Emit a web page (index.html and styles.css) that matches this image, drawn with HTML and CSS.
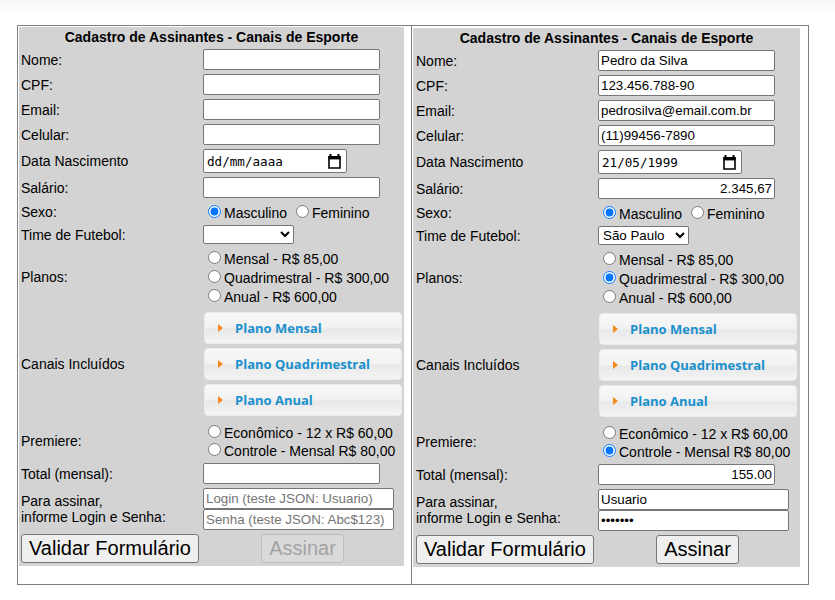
FILE: index.html
```html
<!DOCTYPE html>
<html lang="pt-BR">
<head>
<meta charset="utf-8">
<title>Cadastro de Assinantes - Canais de Esporte</title>
<link rel="stylesheet" href="styles.css">
</head>
<body>
<div class="frame">
  <div class="cell">
    <form class="panel">
      <div class="title">Cadastro de Assinantes - Canais de Esporte</div>
      <div class="lbl">Nome:</div><div class="fld"><input class="txt" type="text"></div>
      <div class="lbl">CPF:</div><div class="fld"><input class="txt" type="text"></div>
      <div class="lbl">Email:</div><div class="fld"><input class="txt" type="text"></div>
      <div class="lbl">Celular:</div><div class="fld"><input class="txt" type="text"></div>
      <div class="lbl">Data Nascimento</div>
      <div class="fld"><div class="date"><span>dd/mm/aaaa</span><svg class="cal" width="13" height="15" viewBox="0 0 13 15"><path d="M1.5 0h2v3h-2zM9.5 0h2v3h-2z" fill="#000"/><path d="M1 2.8h11v11.2H1z" fill="none" stroke="#000" stroke-width="1.6"/><rect x="0.5" y="2" width="12" height="3.4" fill="#000"/></svg></div></div>
      <div class="lbl">Salário:</div><div class="fld"><input class="txt num" type="text"></div>
      <div class="lbl">Sexo:</div>
      <div class="fld"><div class="opt"><input type="radio" name="sx1" checked>Masculino <input type="radio" name="sx1">Feminino</div></div>
      <div class="lbl">Time de Futebol:</div>
      <div class="fld"><select class="sel"><option></option></select></div>
      <div class="lbl">Planos:</div>
      <div class="fld">
        <label class="opt"><input type="radio" name="pl1">Mensal - R$ 85,00</label>
        <label class="opt"><input type="radio" name="pl1">Quadrimestral - R$ 300,00</label>
        <label class="opt"><input type="radio" name="pl1">Anual - R$ 600,00</label>
      </div>
      <div class="lbl">Canais Incluídos</div>
      <div class="fld">
        <div class="acc">
          <div class="acc-item"><span class="arrow"></span>Plano Mensal</div>
          <div class="acc-item"><span class="arrow"></span>Plano Quadrimestral</div>
          <div class="acc-item"><span class="arrow"></span>Plano Anual</div>
        </div>
      </div>
      <div class="lbl">Premiere:</div>
      <div class="fld tight">
        <label class="opt"><input type="radio" name="pr1">Econômico - 12 x R$ 60,00</label>
        <label class="opt"><input type="radio" name="pr1">Controle - Mensal R$ 80,00</label>
      </div>
      <div class="lbl">Total (mensal):</div><div class="fld"><input class="txt num" type="text"></div>
      <div class="lbl">Para assinar,<br>informe Login e Senha:</div>
      <div class="fld">
        <input class="txt login" type="text" placeholder="Login (teste JSON: Usuario)">
        <input class="txt login" type="password" placeholder="Senha (teste JSON: Abc$123)">
      </div>
      <div class="fld"><button class="btn" type="button">Validar Formulário</button></div>
      <div class="fld center"><button class="btn" type="button" disabled>Assinar</button></div>
    </form>
  </div>
  <div class="cell cell-b">
    <form class="panel panel-b">
      <div class="title">Cadastro de Assinantes - Canais de Esporte</div>
      <div class="lbl">Nome:</div><div class="fld"><input class="txt" type="text" value="Pedro da Silva"></div>
      <div class="lbl">CPF:</div><div class="fld"><input class="txt" type="text" value="123.456.788-90"></div>
      <div class="lbl">Email:</div><div class="fld"><input class="txt" type="text" value="pedrosilva@email.com.br"></div>
      <div class="lbl">Celular:</div><div class="fld"><input class="txt" type="text" value="(11)99456-7890"></div>
      <div class="lbl">Data Nascimento</div>
      <div class="fld"><div class="date"><span>21/05/1999</span><svg class="cal" width="13" height="15" viewBox="0 0 13 15"><path d="M1.5 0h2v3h-2zM9.5 0h2v3h-2z" fill="#000"/><path d="M1 2.8h11v11.2H1z" fill="none" stroke="#000" stroke-width="1.6"/><rect x="0.5" y="2" width="12" height="3.4" fill="#000"/></svg></div></div>
      <div class="lbl">Salário:</div><div class="fld"><input class="txt num" type="text" value="2.345,67"></div>
      <div class="lbl">Sexo:</div>
      <div class="fld"><div class="opt"><input type="radio" name="sx2" checked>Masculino <input type="radio" name="sx2">Feminino</div></div>
      <div class="lbl">Time de Futebol:</div>
      <div class="fld"><select class="sel"><option>São Paulo</option></select></div>
      <div class="lbl">Planos:</div>
      <div class="fld">
        <label class="opt"><input type="radio" name="pl2">Mensal - R$ 85,00</label>
        <label class="opt"><input type="radio" name="pl2" checked>Quadrimestral - R$ 300,00</label>
        <label class="opt"><input type="radio" name="pl2">Anual - R$ 600,00</label>
      </div>
      <div class="lbl">Canais Incluídos</div>
      <div class="fld">
        <div class="acc">
          <div class="acc-item"><span class="arrow"></span>Plano Mensal</div>
          <div class="acc-item"><span class="arrow"></span>Plano Quadrimestral</div>
          <div class="acc-item"><span class="arrow"></span>Plano Anual</div>
        </div>
      </div>
      <div class="lbl">Premiere:</div>
      <div class="fld tight">
        <label class="opt"><input type="radio" name="pr2">Econômico - 12 x R$ 60,00</label>
        <label class="opt"><input type="radio" name="pr2" checked>Controle - Mensal R$ 80,00</label>
      </div>
      <div class="lbl">Total (mensal):</div><div class="fld"><input class="txt num" type="text" value="155.00"></div>
      <div class="lbl">Para assinar,<br>informe Login e Senha:</div>
      <div class="fld">
        <input class="txt login" type="text" placeholder="Login (teste JSON: Usuario)" value="Usuario">
        <input class="txt login" type="password" placeholder="Senha (teste JSON: Abc$123)" value="Abc$123">
      </div>
      <div class="fld"><button class="btn" type="button">Validar Formulário</button></div>
      <div class="fld center"><button class="btn" type="button">Assinar</button></div>
    </form>
  </div>
</div>
</body>
</html>
```
FILE: styles.css
```css
html, body {
  margin: 0;
  padding: 0;
}
body {
  background: #fff linear-gradient(to bottom, #f6f6f6 0, #ffffff 12px) no-repeat;
  font-family: "Liberation Sans", Arial, sans-serif;
  font-size: 14px;
  color: #000;
  padding: 25px 0 0 17px;
}
.frame {
  display: grid;
  grid-template-columns: 393px 397px;
  align-items: start;
  width: max-content;
  border: 1px solid #808080;
}
.cell {
  padding: 1px 1px 17px;
}
.cell-b {
  border-left: 1px solid #808080;
  align-self: stretch;
}
.panel {
  display: grid;
  grid-template-columns: 180px 199px;
  gap: 2px;
  padding: 2px;
  background: #d3d3d3;
  width: max-content;
  align-items: center;
  margin: 0;
}
.panel-b {
  padding: 2px 3px;
  margin-top: 1px;
}
.title {
  grid-column: 1 / -1;
  text-align: center;
  font-weight: bold;
  line-height: 16px;
  padding: 0 0 1px;
}
.lbl {
  padding: 1px 0;
  line-height: 16px;
}
.fld {
  padding: 1px 0;
}
.center {
  text-align: center;
}
.txt {
  display: block;
  box-sizing: border-box;
  width: 177px;
  height: 21px;
  margin: 0;
  padding: 1px 2px;
  border: 1px solid #767676;
  border-radius: 2px;
  background: #fff;
  color: #000;
  font-family: "Liberation Sans", Arial, sans-serif;
  font-size: 13.333px;
  outline: none;
}
.txt::placeholder {
  color: #757575;
}
.num {
  text-align: right;
}
.login {
  width: 191px;
}
.date {
  box-sizing: border-box;
  width: 144px;
  height: 24px;
  border: 1px solid #767676;
  border-radius: 2px;
  background: #fff;
  display: flex;
  align-items: center;
  justify-content: space-between;
  padding: 0 5px 0 3px;
  font-family: "DejaVu Sans Mono", "Liberation Mono", monospace;
  font-size: 12.6px;
}
.cal {
  display: block;
}
.sel {
  display: block;
  box-sizing: border-box;
  width: 91px;
  height: 19px;
  margin: 0;
  font-family: "Liberation Sans", Arial, sans-serif;
  font-size: 13.333px;
  color: #000;
  background: #fff;
  border: 1px solid #767676;
  border-radius: 2px;
}
.opt {
  display: block;
  height: 19px;
  white-space: nowrap;
}
.tight .opt {
  height: 18px;
}
.opt input {
  margin: 3px 3px 0 5px;
  width: 13px;
  height: 13px;
}
.tight .opt input {
  margin-top: 2px;
}
.acc {
  display: flex;
  flex-direction: column;
  gap: 4px;
  padding: 3px 0 3px 1px;
}
.acc-item {
  box-sizing: border-box;
  width: 198px;
  height: 32px;
  display: flex;
  align-items: center;
  padding-left: 13px;
  border: 1px solid #ececec;
  border-radius: 4px;
  background: linear-gradient(to bottom, #f8f8f8 0%, #f2f2f2 50%, #e8e8e8 53%, #f4f4f4 100%);
  font-family: "Open Sans", "Liberation Sans", sans-serif;
  font-weight: 700;
  font-size: 13px;
  color: #1a90cc;
}
.arrow {
  width: 0;
  height: 0;
  border-left: 5px solid #f38b1c;
  border-top: 4px solid transparent;
  border-bottom: 4px solid transparent;
  margin-right: 12px;
}
.btn {
  box-sizing: border-box;
  margin: 0;
  height: 29px;
  padding: 2px 7px;
  border: 1px solid #767676;
  border-radius: 3px;
  background: #efefef;
  color: #000;
  font-family: "Liberation Sans", Arial, sans-serif;
  font-size: 20px;
  line-height: 23px;
}
.btn:disabled {
  background: #dadada;
  border-color: #bdbdbd;
  color: #a3a3a3;
}
```
